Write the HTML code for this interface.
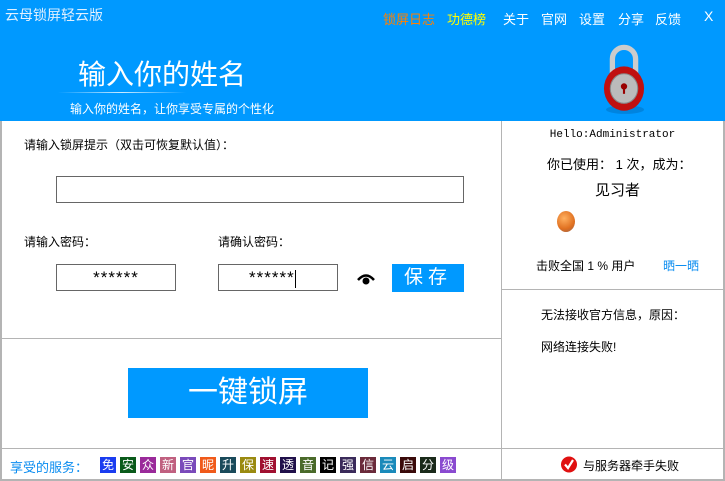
<!DOCTYPE html>
<html><head><meta charset="utf-8"><style>
*{margin:0;padding:0;box-sizing:border-box}
body{width:725px;height:481px;position:relative;background:#fff;font-family:"Liberation Sans","Noto Sans CJK SC",sans-serif;overflow:hidden;color:#000}
.a{position:absolute;white-space:nowrap}
.hdr{position:absolute;left:0;top:0;width:725px;height:121px;background:#0099ff}
.box{position:absolute;border:1px solid #666;background:#fff}
.ln{position:absolute;background:#b4b4b4}
.bd{position:absolute;top:457px;width:16px;height:16px;color:#fff;font-size:12px;line-height:16px;text-align:center}
.star{font-size:17px;letter-spacing:1px}
</style></head><body>
<div class="hdr"></div>
<div class="a" style="left:5px;top:5px;font-size:14px;color:#e0f0ff">云母锁屏轻云版</div>
<div class="a" style="left:383px;top:9px;font-size:13px;color:#ff8000">锁屏日志</div>
<div class="a" style="left:447px;top:9px;font-size:13px;color:#ffff00">功德榜</div>
<div class="a" style="left:503px;top:9px;font-size:13px;color:#fff">关于</div>
<div class="a" style="left:541px;top:9px;font-size:13px;color:#fff">官网</div>
<div class="a" style="left:579px;top:9px;font-size:13px;color:#fff">设置</div>
<div class="a" style="left:618px;top:9px;font-size:13px;color:#fff">分享</div>
<div class="a" style="left:655px;top:9px;font-size:13px;color:#fff">反馈</div>
<div class="a" style="left:704px;top:8px;font-size:14px;color:#fff">X</div>
<div class="a" style="left:78px;top:53px;font-size:28px;color:#fff">输入你的姓名</div>
<div class="a" style="top:92px;width:128px;height:1px;left:58px;background:linear-gradient(90deg,rgba(255,255,255,0),rgba(255,255,255,.8),rgba(255,255,255,0))"></div>
<div class="a" style="left:70px;top:100px;font-size:12px;color:#fff">输入你的姓名，让你享受专属的个性化</div>
<svg class="a" style="left:598px;top:40px" width="52" height="76" viewBox="0 0 48 72">
<ellipse cx="25" cy="66" rx="18" ry="4" fill="#0070c0" opacity=".5"/>
<path d="M13 32 V18 A11 11 0 0 1 35 18 V32" fill="none" stroke="#ccc" stroke-width="5"/>
<ellipse cx="24" cy="46" rx="19" ry="21" fill="#c01010"/>
<ellipse cx="24" cy="46" rx="13" ry="14" fill="#bbb" stroke="#888"/>
<circle cx="24" cy="44" r="3" fill="#900"/><rect x="23" y="45" width="2" height="6" fill="#900"/>
</svg>
<div class="ln" style="left:0;top:121px;width:2px;height:360px"></div>
<div class="ln" style="left:501px;top:121px;width:1px;height:360px"></div>
<div class="ln" style="left:723px;top:121px;width:2px;height:360px"></div>
<div class="ln" style="left:0;top:338px;width:502px;height:1px"></div>
<div class="ln" style="left:502px;top:289px;width:223px;height:1px"></div>
<div class="ln" style="left:0;top:448px;width:725px;height:1px"></div>
<div class="ln" style="left:0;top:479px;width:725px;height:2px"></div>
<div class="a" style="left:24px;top:136px;font-size:12px">请输入锁屏提示（双击可恢复默认值）：</div>
<div class="box" style="left:56px;top:176px;width:408px;height:27px"></div>
<div class="a" style="left:24px;top:233px;font-size:12px">请输入密码：</div>
<div class="a" style="left:218px;top:233px;font-size:12px">请确认密码：</div>
<div class="box" style="left:56px;top:264px;width:120px;height:27px;text-align:center;line-height:25px"><span class="star">******</span></div>
<div class="box" style="left:218px;top:264px;width:120px;height:27px;padding-left:30px;line-height:25px"><span class="star">******</span><span style="display:inline-block;width:1px;height:18px;background:#000;vertical-align:middle"></span></div>
<svg class="a" style="left:357px;top:273px" width="18" height="12" viewBox="0 0 18 12"><path d="M1 7 Q9 -2 17 7" fill="none" stroke="#000" stroke-width="2.5"/><circle cx="9" cy="8" r="3.5" fill="#000"/></svg>
<div class="a" style="left:392px;top:264px;width:72px;height:28px;background:#0099ff;color:#fff;font-size:19px;text-align:center;line-height:28px;letter-spacing:5px">保存</div>
<div class="a" style="left:128px;top:368px;width:240px;height:50px;background:#0099ff;color:#fff;font-size:30px;text-align:center;line-height:50px">一键锁屏</div>
<div class="a" style="left:502px;top:129px;width:221px;text-align:center;font-family:'Liberation Mono',monospace;font-size:11px">Hello:Administrator</div>
<div class="a" style="left:547px;top:154px;font-size:13px">你已使用： 1 次，成为：</div>
<div class="a" style="left:595px;top:179px;font-size:15px">见习者</div>
<div class="a" style="left:557px;top:211px;width:18px;height:21px;border-radius:50%;background:radial-gradient(circle at 40% 35%,#ffb060,#e07020 60%,#906050)"></div>
<div class="a" style="left:536px;top:257px;font-size:12px">击败全国 1 % 用户</div>
<div class="a" style="left:663px;top:257px;font-size:12px;color:#0a8cf0">晒一晒</div>
<div class="a" style="left:541px;top:306px;font-size:12px">无法接收官方信息，原因：</div>
<div class="a" style="left:541px;top:338px;font-size:12px">网络连接失败!</div>
<div class="a" style="left:10px;top:457px;font-size:13px;color:#0a8cf0">享受的服务：</div>
<div class="bd" style="left:100px;background:#1a3cf0">免</div>
<div class="bd" style="left:120px;background:#0a5a1a">安</div>
<div class="bd" style="left:140px;background:#9a2a9a">众</div>
<div class="bd" style="left:160px;background:#c06080">新</div>
<div class="bd" style="left:180px;background:#7a4aba">官</div>
<div class="bd" style="left:200px;background:#f05a1a">昵</div>
<div class="bd" style="left:220px;background:#1a4a5a">升</div>
<div class="bd" style="left:240px;background:#9a8a10">保</div>
<div class="bd" style="left:260px;background:#a01030">速</div>
<div class="bd" style="left:280px;background:#20104a">透</div>
<div class="bd" style="left:300px;background:#4a6a2a">音</div>
<div class="bd" style="left:320px;background:#000">记</div>
<div class="bd" style="left:340px;background:#3a2a5a">强</div>
<div class="bd" style="left:360px;background:#6a2a3a">信</div>
<div class="bd" style="left:380px;background:#1a8aba">云</div>
<div class="bd" style="left:400px;background:#3a0a0a">启</div>
<div class="bd" style="left:420px;background:#1a2a1a">分</div>
<div class="bd" style="left:440px;background:#8a4ad0">级</div>
<svg class="a" style="left:561px;top:456px" width="16" height="17" viewBox="0 0 16 17"><circle cx="8" cy="8.5" r="8" fill="#e01010"/><path d="M4 8.5 L7 12 L12 4" fill="none" stroke="#fff" stroke-width="2.2"/></svg>
<div class="a" style="left:583px;top:457px;font-size:12px">与服务器牵手失败</div>
</body></html>
